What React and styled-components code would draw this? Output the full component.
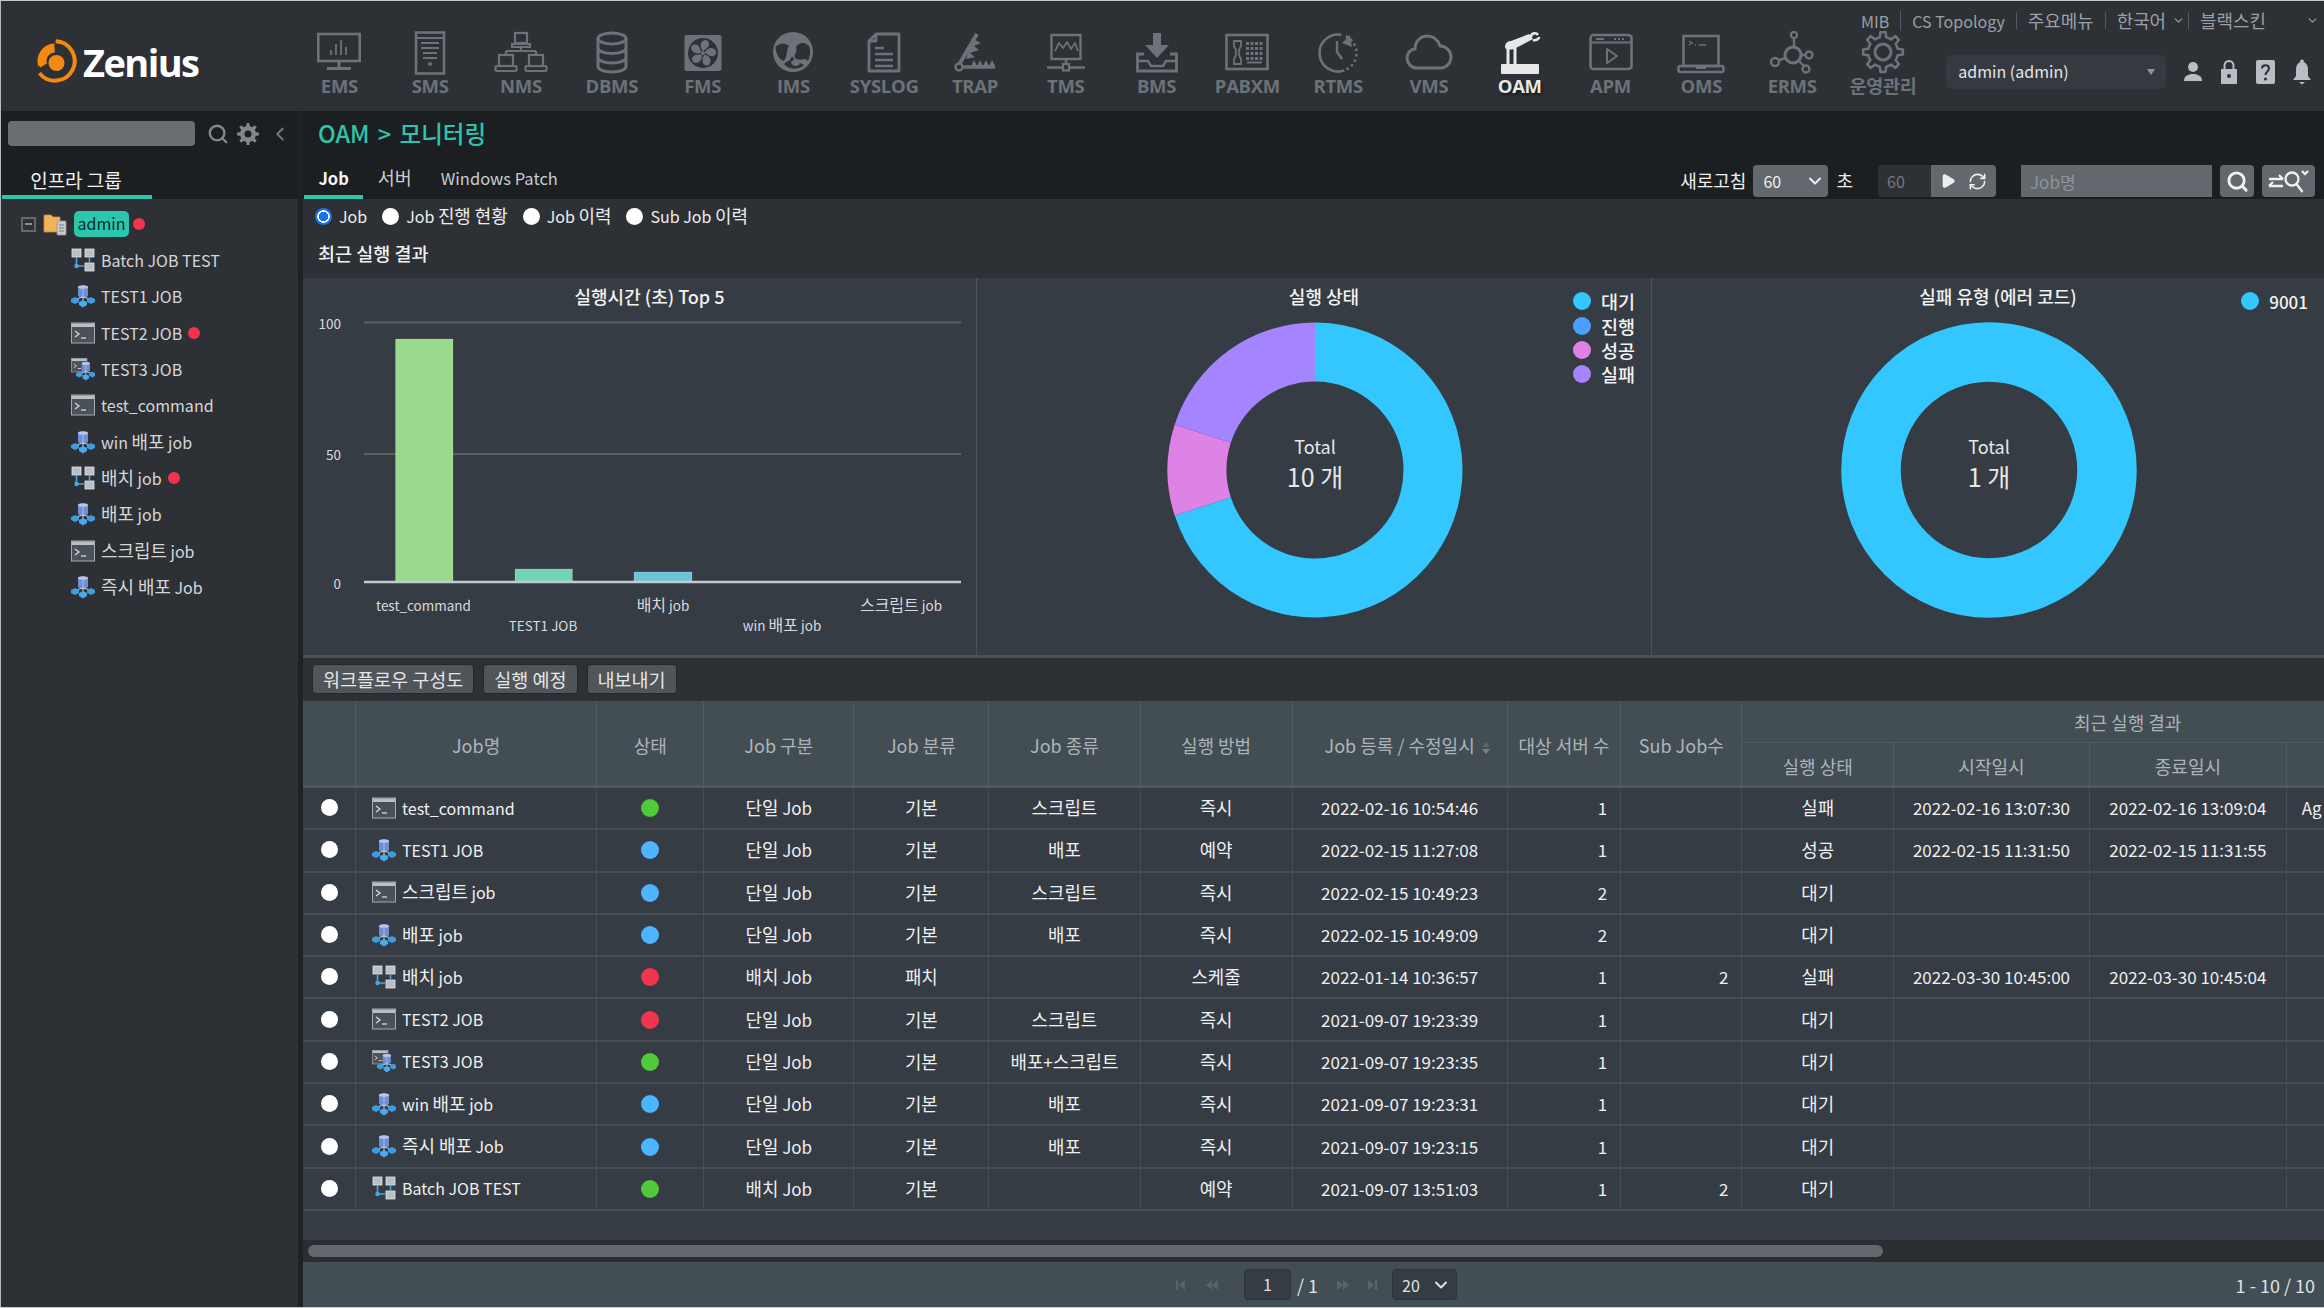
import React from "react";
import styled, { createGlobalStyle } from "styled-components";
import { ChevronDown, Search, ChevronLeft, RefreshCw, Play } from "lucide-react";

const FONT = `"Noto Sans CJK KR", "Noto Sans", sans-serif`;

const Global = createGlobalStyle`
  html, body { margin: 0; padding: 0; background: #2d3136; }
  body { font-family: ${FONT}; width: 2324px; height: 1308px; overflow: hidden; }
  * { box-sizing: border-box; }
`;

const Shell = styled.div`
  width: 2324px; height: 1308px; display: flex; flex-direction: column; overflow: hidden;
  border-top: 1px solid #c9c9c9; border-left: 1px solid #b9b9b9; border-bottom: 1px solid #c9c9c9;
  background: #2d3136; color: #e9ecee;
`;

/* Hangul runs are drawn a little larger than the Latin text around them */
const HANGUL = /([가-힣]+(?: [가-힣]+)*)/;
const Ko = styled.span`font-size: ${p => p.$s || 1.12}em; line-height: 1;`;
const K = ({ children, s }) =>
  String(children).split(HANGUL).map((part, i) =>
    i % 2 ? <Ko key={i} $s={s}>{part}</Ko> : part
  );

/* ---------- top bar ---------- */
const TopBar = styled.header`
  height: 110px; flex: none; display: flex; background: #2d3136;
`;
const Brand = styled.div`
  width: 293px; flex: none; display: flex; align-items: flex-start; gap: 6px; padding: 38px 0 0 32px;
`;
const BrandWord = styled.span`
  font-family: "Open Sans", sans-serif; font-weight: 700; font-size: 38px; line-height: 46px;
  letter-spacing: -1.6px; color: #fff;
`;
const TopRight = styled.div`flex: 1; display: flex; flex-direction: column; min-width: 0;`;
const UtilRow = styled.div`
  height: 30px; display: flex; justify-content: flex-end; align-items: center; padding: 9px 4px 0 0;
`;
const UtilLink = styled.span`
  font-size: 16px; line-height: 20px; color: #9aa0a5; padding: 0 11px; display: inline-flex; align-items: center; gap: 6px;
  border-left: ${p => (p.$first ? "none" : "1px solid #53595e")};
  margin-right: ${p => p.$gap || 0}px;
  white-space: nowrap;
`;
const NavRow = styled.div`display: flex;`;
const NavList = styled.nav`
  display: grid; grid-template-columns: repeat(18, 90.8px); flex: none;
`;
const NavItem = styled.div`
  display: flex; flex-direction: column; align-items: center;
  color: ${p => (p.$active ? "#e8e8e8" : "#6c7278")};
`;
const NavLabel = styled.span`
  font-family: "Open Sans", "Noto Sans CJK KR", sans-serif; font-weight: 700; font-size: 18.5px; line-height: 22px;
  white-space: nowrap; letter-spacing: -0.3px;
  text-shadow: ${p => (p.$active ? "1px 2px 3px #15171a" : "none")};
`;
const UserArea = styled.div`
  display: flex; align-items: center; height: 34px; margin: 24px 0 0 18px;
`;
const UserSelect = styled.div`
  width: 220px; height: 34px; background: #353a40; border-radius: 5px; display: flex; align-items: center;
  justify-content: space-between; padding: 0 11px 3px 12px; font-size: 16px; color: #e4e6e8; margin-right: 8px;
`;
const Caret = styled.i`
  width: 0; height: 0; margin-top: 3px; border-left: 4px solid transparent; border-right: 4px solid transparent; border-top: 6px solid #8d9398;
`;
const UserIcon = styled.span`width: 36.5px; display: flex; justify-content: center; color: #b8bec3;`;

/* ---------- body ---------- */
const Body = styled.div`flex: 1; display: flex; min-height: 0; background: #1f2225;`;
const Sidebar = styled.aside`width: 297px; flex: none; display: flex; flex-direction: column; background: #2d3136;`;
const SideTop = styled.div`height: 88px; flex: none; background: #1c1f22; display: flex; flex-direction: column; justify-content: space-between;`;
const SearchRow = styled.div`display: flex; align-items: center; padding: 10px 0 0 7px; color: #83888d;`;
const SideSearch = styled.div`width: 190px; height: 25px; border-radius: 4px; background: #6a6e73; margin-right: 8px;`;
const SideIcon = styled.span`display: flex; width: ${p => p.$w || 30}px; justify-content: center; color: ${p => p.$c || "#83888d"};`;
const SideTab = styled.div`
  width: 150px; height: 36px; border-bottom: 4px solid #2cc5ad; font-size: 19px; line-height: 33px; color: #f3f3f3; text-align: center; padding-right: 2px; margin-left: 1px;
`;
const Tree = styled.div`padding-top: 7px;`;
const TreeRoot = styled.div`display: flex; align-items: center; height: 36px; padding-left: 20px; gap: 7px;`;
const MinusBox = styled.span`
  width: 15px; height: 15px; border: 2px solid #62686d; display: flex; align-items: center; justify-content: center;
  &::after { content: ""; width: 7px; height: 2px; background: #8a8f94; }
`;
const RootPill = styled.span`
  background: #2cc5ad; color: #0d2d29; border-radius: 5px; height: 26px; line-height: 25px; width: 55px; text-align: center; font-size: 16px;
`;
const RedDot = styled.span`
  width: 12px; height: 12px; border-radius: 50%; background: #f0344f; flex: none; margin-left: ${p => p.$m || 0}px;
`;
const TreeRow = styled.div`
  display: flex; align-items: center; height: 36.3px; padding-left: 70px; gap: 6px; font-size: 16px; color: #d4d7da;
`;
const RowText = styled.span`white-space: nowrap;`;

const Main = styled.main`flex: 1; min-width: 0; margin-left: 5px; display: flex; flex-direction: column; background: #2d3136;`;
const TitleBar = styled.div`height: 88px; flex: none; background: #1c1f22; display: flex; flex-direction: column; justify-content: space-between;`;
const PageTitle = styled.h1`
  margin: 0; padding: 7px 0 0 15px; font-size: 23.5px; line-height: 30px; font-weight: 500; color: #2ec4ad; word-spacing: 3px;
`;
const TabRow = styled.div`display: flex; align-items: flex-end; justify-content: space-between; padding-right: 9px;`;
const Tabs = styled.div`display: flex; padding-left: 1px;`;
const Tab = styled.div`
  height: 36px; padding: 0 14.5px; line-height: 31px; font-size: 16.5px; white-space: nowrap;
  font-weight: ${p => (p.$active ? 700 : 400)};
  color: ${p => (p.$active ? "#f5f5f5" : "#c8ccd0")};
  border-bottom: 4px solid ${p => (p.$active ? "#2cc5ad" : "transparent")};
`;
const Controls = styled.div`display: flex; align-items: center; height: 32px; margin-bottom: 2px; font-size: 18px; color: #eee;`;
const CtlLabel = styled.span`margin: ${p => p.$m || "0"}; white-space: nowrap;`;
const CtlSelect = styled.div`
  width: 75px; height: 32px; background: #62686d; border-radius: 4px; display: flex; align-items: center; justify-content: space-between;
  padding: 0 3px 0 10px; color: #eee; font-size: 16px;
`;
const Timer = styled.div`display: flex; height: 32px; border-radius: 4px; overflow: hidden; margin-left: 25px;`;
const TimerVal = styled.div`width: 53px; background: #2d3136; color: #74797e; font-size: 16px; line-height: 32px; padding-left: 9px;`;
const TimerBtns = styled.div`width: 65px; background: #62686d; display: flex; align-items: center; justify-content: space-around; padding: 0 3px; color: #eee;`;
const JobInput = styled.input`
  width: 191px; height: 32px; margin-left: 25px; background: #62686d; border: 0; outline: 0; color: #eee; font: 17px ${FONT}; padding: 0 9px;
  &::placeholder { color: #8f9498; opacity: 1; }
`;
const IconBtn = styled.div`
  width: ${p => p.$w}px; height: 32px; margin-left: 8px; border-radius: 4px; background: #62686d; color: #f0f0f0; display: flex; align-items: center; justify-content: center;
`;

const RadioRow = styled.div`display: flex; align-items: center; height: 38px; padding: 0 0 4px 12px; font-size: 16px; color: #eee;`;
const RadioLabel = styled.label`display: flex; align-items: center; gap: 7px; margin-right: 15px; white-space: nowrap;`;
const Radio = styled.input.attrs({ type: "radio" })`
  appearance: none; margin: 0; width: 17px; height: 17px; border-radius: 50%; background: #fff; flex: none;
  &:checked { background: radial-gradient(circle, #1a74ef 0 4.5px, #fff 5px 6px, #1a74ef 6.5px); }
`;
const SectionTitle = styled.h2`
  margin: 0; height: 41px; padding-left: 15px; font-size: 18.5px; line-height: 32px; font-weight: 500; color: #f0f0f0;
`;
const Charts = styled.section`
  height: 380px; flex: none; display: grid; grid-template-columns: 674px 675px 1fr; background: #363c43; border-bottom: 3px solid #4a5056;
`;
const ChartCell = styled.div`
  position: relative; padding-top: 6px; display: flex; flex-direction: column; align-items: center;
  border-right: ${p => (p.$last ? "none" : "1px solid #4d5359")};
`;
const ChartTitle = styled.div`
  height: 25px; line-height: 24px; font-size: 18px; font-weight: 500; padding-left: 20px; color: #f2f2f2; white-space: nowrap;
`;
const DonutWrap = styled.div`position: relative; width: 296px; height: 296px; margin: 13px 0 0 2px;`;
const DonutCenter = styled.div`
  position: absolute; inset: 0; display: flex; flex-direction: column; align-items: center; justify-content: center; color: #e6e8ea; padding-bottom: 15px;
`;
const DonutTotal = styled.span`font-size: 18px; line-height: 26px;`;
const DonutCount = styled.span`font-size: 25px; line-height: 34px;`;
const Legend = styled.div`position: absolute; top: 11px; right: 16px; display: flex; flex-direction: column;`;
const LegendRow = styled.div`
  display: flex; align-items: center; gap: 10px; height: 24.4px; font-size: 18.5px; font-weight: 500; color: #f2f2f2;
`;
const LegendNumber = styled.span`font-size: 17px;`;
const LegendDot = styled.span`width: 18px; height: 18px; border-radius: 50%; background: ${p => p.$c};`;

const ActionBar = styled.div`height: 43px; flex: none; display: flex; align-items: center; gap: 9px; padding: 0 0 2px 9px;`;
const ActionBtn = styled.button`
  height: 30px; padding: 0 10px; background: #505559; border: 1px solid #24272a; border-radius: 4px; color: #e4e6e8;
  font: 18.5px ${FONT}; line-height: 26px; white-space: nowrap;
`;

const TableWrap = styled.div`flex: 1; min-height: 0; overflow: hidden; background: #363c43;`;
const Grid = styled.table`
  border-collapse: separate; border-spacing: 0; table-layout: fixed; width: 2211px; font-size: 17px;
`;
const Th = styled.th`
  background: #434d54; color: #adb4b9; font-weight: 400; font-size: 18px; height: ${p => p.$h || 42}px; padding: ${p => (p.$sub ? 0 : "4px 0 0")};
  border-right: 1px solid #515a61; border-bottom: ${p => (p.$sub ? "1px solid #515a61" : "3px solid #50575d")}; white-space: nowrap;
  text-align: center;
`;
const Td = styled.td`
  height: 42.3px; padding: ${p => (p.$r ? "0 13px 1px 0" : "0 0 1px")}; text-align: ${p => (p.$r ? "right" : "center")}; color: #eef0f1;
  border-right: 1px solid #474d53; border-bottom: 2px solid #474d53; white-space: nowrap; overflow: hidden;
`;
const LeftTd = styled(Td)`text-align: left; padding-left: ${p => p.$pl || 15}px;`;
const NameCell = styled.div`display: flex; align-items: center; gap: 6px; color: #eef0f1; font-size: 16px;`;
const Status = styled.span`display: block; margin: 1px auto 0; width: 18px; height: 18px; border-radius: 50%; background: ${p => p.$c};`;
const RadioCenter = styled.div`display: flex; justify-content: center;`;
const SortMark = styled.span`display: inline-flex; flex-direction: column; gap: 2px; margin: 0 -15px 0 7px; vertical-align: middle;
  &::before, &::after { content: ""; width: 0; height: 0; border-left: 4px solid transparent; border-right: 4px solid transparent; }
  &::before { border-bottom: 5px solid #5f666c; }
  &::after { border-top: 5px solid #7c8389; }
`;

const ScrollTrack = styled.div`height: 22px; flex: none; background: #2a2e31; padding: 5px 0 5px 5px;`;
const ScrollThumb = styled.div`width: 1575px; height: 12px; border-radius: 6px; background: #62686d;`;
const Footer = styled.footer`
  height: 45px; flex: none; background: #434d54; display: flex; align-items: center; padding: 0 9px 0 861px; font-size: 18px; color: #dfe2e4;
`;
const PagerIcon = styled.span`display: flex; width: ${p => p.$w || 30}px; margin-left: ${p => p.$m || 0}px; justify-content: center; color: #59636a;`;
const PageInput = styled.div`
  width: 47px; height: 31px; background: #363c43; border: 1px solid #2d3338; border-radius: 4px; text-align: center; line-height: 29px; margin: 0 6px 0 16px; font-size: 16px;
`;
const PageSelect = styled.div`
  width: 65px; height: 31px; background: #363c43; border: 1px solid #2d3338; border-radius: 4px; display: flex; align-items: center; justify-content: space-between; padding: 0 5px 0 9px; margin-left: 4px; font-size: 16px;
`;
const PageTotal = styled.span`margin-left: auto;`;

/* ---------- drawings ---------- */
const pt = (cx, cy, r, a) => {
  const t = ((a - 90) * Math.PI) / 180;
  return [cx + r * Math.cos(t), cy + r * Math.sin(t)];
};
const arc = (cx, cy, r, a0, a1) => {
  const [x0, y0] = pt(cx, cy, r, a0);
  const [x1, y1] = pt(cx, cy, r, a1);
  return `M${x0} ${y0}A${r} ${r} 0 ${a1 - a0 > 180 ? 1 : 0} 1 ${x1} ${y1}`;
};
const ring = (cx, cy, R, r, a0, a1) => {
  const [x0, y0] = pt(cx, cy, R, a0);
  const [x1, y1] = pt(cx, cy, R, a1);
  const [x2, y2] = pt(cx, cy, r, a1);
  const [x3, y3] = pt(cx, cy, r, a0);
  const f = a1 - a0 > 180 ? 1 : 0;
  return `M${x0} ${y0}A${R} ${R} 0 ${f} 1 ${x1} ${y1}L${x2} ${y2}A${r} ${r} 0 ${f} 0 ${x3} ${y3}Z`;
};
const gear = (cx, cy, R, r, n) => {
  const step = 360 / n;
  let d = "";
  for (let i = 0; i < n; i++) {
    const a = i * step;
    const p = [
      pt(cx, cy, r, a - step * 0.5),
      pt(cx, cy, r, a - step * 0.28),
      pt(cx, cy, R, a - step * 0.16),
      pt(cx, cy, R, a + step * 0.16),
      pt(cx, cy, r, a + step * 0.28),
    ];
    p.forEach(([x, y], j) => { d += `${i === 0 && j === 0 ? "M" : "L"}${x.toFixed(2)} ${y.toFixed(2)}`; });
  }
  return d + "Z";
};

const Logo = () => (
  <svg width="44" height="44" viewBox="0 0 44 44">
    <path d={arc(22, 22, 19.7, 2, 232)} fill="none" stroke="#f28a10" strokeWidth="4" />
    <path d={ring(22, 22, 17.5, 8.5, 252, 358)} fill="#f28a10" />
    <path d="M6 24a16 16 0 0 0 1.2 4.5l5-3a10 10 0 0 1-.6-1.5Z" fill="#f28a10" />
    <circle cx="23.5" cy="24" r="8" fill="#f28a10" />
  </svg>
);

const SolidGear = () => (
  <svg width="22" height="22" viewBox="0 0 22 22">
    <path d={gear(11, 11, 11, 8, 8)} fill="currentColor" />
    <circle cx="11" cy="11" r="3.5" fill="#1c1f22" />
  </svg>
);

const NI = ({ children, box = "-6 0 56 44" }) => (
  <svg width="56" height="44" viewBox={box} fill="none" stroke="currentColor" strokeWidth="2.6">{children}</svg>
);
const navIcons = {
  EMS: (
    <NI>
      <rect x="1.3" y="3" width="41.4" height="27" />
      <path d="M22 30v6M10 37.5h24" strokeWidth="3" />
      <path d="M14 24v-5M19 24V13M24 24V9M29 24v-8" strokeWidth="1.8" />
    </NI>
  ),
  SMS: (
    <NI>
      <rect x="8" y="1.5" width="28" height="41" />
      <path d="M8 7h28M13 12h18M13 17h18M15 22h14M15 27h14" strokeWidth="1.8" />
      <circle cx="22" cy="33" r="2" fill="currentColor" stroke="none" />
    </NI>
  ),
  NMS: (
    <NI>
      <rect x="16" y="2" width="12" height="10" strokeWidth="2.2" />
      <rect x="13" y="13" width="18" height="3" strokeWidth="2" />
      <path d="M22 16v4M7 20h30M7 20v4M37 20v4" strokeWidth="2.2" />
      <rect x="0" y="24" width="14" height="11" strokeWidth="2.2" />
      <rect x="-3.5" y="35" width="21" height="5" rx="1" strokeWidth="2.2" />
      <rect x="30" y="24" width="14" height="11" strokeWidth="2.2" />
      <rect x="26.5" y="35" width="21" height="5" rx="1" strokeWidth="2.2" />
    </NI>
  ),
  DBMS: (
    <NI>
      <ellipse cx="22" cy="7.5" rx="14" ry="5.5" strokeWidth="3" />
      <path d="M8 7.5v28c0 3 6 5.5 14 5.5s14-2.5 14-5.5v-28M8 17c0 3 6 5.5 14 5.5S36 20 36 17M8 26.5c0 3 6 5.5 14 5.5s14-2.5 14-5.5" strokeWidth="3" />
    </NI>
  ),
  FMS: (
    <NI>
      <rect x="3.5" y="4" width="37" height="36" rx="2" fill="currentColor" stroke="none" />
      <circle cx="22" cy="22" r="15" fill="#2d3136" stroke="none" />
      {[0, 72, 144, 216, 288].map(a => (
        <path key={a} transform={`rotate(${a} 22 22)`} d="M22 20C18 16 19 10 24 9C28 9 29 13 27 16C25 18 24 19 22 20Z" fill="currentColor" stroke="none" />
      ))}
      <circle cx="22" cy="22" r="2" fill="currentColor" stroke="none" />
    </NI>
  ),
  IMS: (
    <NI>
      <circle cx="22" cy="21" r="20" fill="currentColor" stroke="none" />
      <path d="M4.5 16C8 12 13 11 18 15C15 19 17 24 13 30C9 29 5 24 4.5 16Z M25 16C28 11 34 11 38 15C40 20 39 26 37 30C32 26 30 31 24 27C22 24 27 21 25 16Z M13 33C17 29 19 31 21 25C24 31 29 32 33 34C28 39 17 39 13 33Z" fill="#2d3136" stroke="none" />
      <path d="M20 31C24 26 27 30 29 33C26 36 21 36 20 31Z" fill="currentColor" stroke="none" />
    </NI>
  ),
  SYSLOG: (
    <NI>
      <path d="M14 3h23v37H7V10ZM14 3v7H7" strokeWidth="2.8" strokeLinejoin="round" />
      <path d="M13 17h9M13 23h18M13 29h18M13 35h18" strokeWidth="2.4" />
    </NI>
  ),
  TRAP: (
    <NI>
      <circle cx="6" cy="36" r="3.5" strokeWidth="2.4" />
      <path d="M7 32L24 3" strokeWidth="4" />
      <path d="M10 36H42" strokeWidth="3.5" />
      <path d="M20 8L28 12L21 15L26 19L17 22L22 26L13 28Z" fill="currentColor" stroke="none" />
      <path d="M18 35l3-6 3 6 3-6 3 6 3-6 3 6 3-6 3 6Z" fill="currentColor" stroke="none" />
    </NI>
  ),
  TMS: (
    <NI>
      <rect x="7.5" y="4" width="29" height="24" strokeWidth="2.4" />
      <path d="M11 20l4-8 4 5 4-6 4 7 4-6 3 8" strokeWidth="1.7" />
      <path d="M22 28v5M3 36.5h16M25 36.5h16" strokeWidth="2.6" />
      <rect x="19" y="33" width="6" height="6.5" strokeWidth="2.2" />
    </NI>
  ),
  BMS: (
    <NI>
      <path d="M18 2h8v12h8L22 27 10 14h8Z" fill="currentColor" stroke="none" />
      <path d="M9 23H2.5V40h39V23H35" strokeWidth="2.8" />
      <path d="M3 30h10l3 5h12l3-5h10" strokeWidth="2.4" />
    </NI>
  ),
  PABXM: (
    <NI>
      <rect x="1.5" y="4" width="41" height="34" strokeWidth="2.6" />
      <path d="M9 10h7v5l-2 4v5l2 4v5H9v-5l2-4v-5l-2-4Z" strokeWidth="1.8" />
      {[0, 1, 2, 3].map(r =>
        [0, 1, 2, 3].map(c => (
          <rect key={`${r}${c}`} x={21 + c * 4.5} y={11 + r * 5} width="3" height="3" fill="currentColor" stroke="none" />
        ))
      )}
      <path d="M22 31.5h15" strokeWidth="2" />
    </NI>
  ),
  RTMS: (
    <NI>
      <path d={arc(22, 22, 18.5, 160, 370)} strokeWidth="2.6" />
      <path d={arc(22, 22, 18.5, 25, 160)} strokeWidth="2.6" strokeDasharray="2.5 3" />
      <path d="M34 4l2 12-10-4Z" fill="currentColor" stroke="none" />
      <path d="M21 10v11l5 7" strokeWidth="2.4" />
    </NI>
  ),
  VMS: (
    <NI>
      <path d="M10 37C4 37 0 32 0 27C0 22 4 18 8 18C8 10 14 5 20 5C27 5 31 9 33 15C39 15 44 20 44 26C44 32 39 37 34 37Z" strokeWidth="3" strokeLinejoin="round" />
    </NI>
  ),
  OAM: (
    <NI>
      <rect x="3" y="33" width="38" height="10" rx="1" fill="currentColor" stroke="none" />
      <path d="M10 33V17M17 33V17" strokeWidth="3" />
      <path d="M7 16c0-4 3-6 6-6l18-7 4 5-19 10c-3 1-9 1-9-2Z" fill="currentColor" stroke="none" />
      <path d="M33 6c0-4 5-5 7-2M35 9c3 1 6-1 6-3" strokeWidth="2.6" />
    </NI>
  ),
  APM: (
    <NI>
      <rect x="1.5" y="4" width="41" height="34" rx="3" strokeWidth="2.6" />
      <path d="M2 11.5h40" strokeWidth="2" />
      <path d="M7 8h8M25 8h2M29 8h2M33 8h2" strokeWidth="2" />
      <path d="M18 18v14l10-7Z" strokeWidth="2" strokeLinejoin="round" />
    </NI>
  ),
  OMS: (
    <NI>
      <rect x="4.5" y="5" width="35" height="30" strokeWidth="2.6" />
      <rect x="-0.5" y="35" width="45" height="6" rx="2" strokeWidth="2.6" />
      <path d="M10 10l3 2-3 2M16 14h1M20 14h7" strokeWidth="1.5" />
      <rect x="17" y="35" width="10" height="3" fill="currentColor" stroke="none" />
    </NI>
  ),
  ERMS: (
    <NI>
      <circle cx="23" cy="24" r="8" strokeWidth="3" />
      <circle cx="24" cy="4" r="3" strokeWidth="2.2" />
      <circle cx="5" cy="31" r="4" strokeWidth="2.4" />
      <circle cx="39" cy="24" r="3.5" strokeWidth="2.4" />
      <circle cx="36" cy="38" r="3.5" strokeWidth="2.4" />
      <path d="M24 7v9M9 29l7-2M31 24h4.5M29 30l5 5" strokeWidth="2.4" />
    </NI>
  ),
  운영관리: (
    <NI>
      <path d={gear(22, 21, 20, 15, 8)} strokeWidth="2.6" strokeLinejoin="round" />
      <circle cx="22" cy="21" r="8" strokeWidth="3" />
    </NI>
  ),
};
const NAV = ["EMS", "SMS", "NMS", "DBMS", "FMS", "IMS", "SYSLOG", "TRAP", "TMS", "BMS", "PABXM", "RTMS", "VMS", "OAM", "APM", "OMS", "ERMS", "운영관리"];

const FolderIcon = () => (
  <svg width="24" height="24" viewBox="0 0 24 24">
    <path d="M1 3h7l2 2h7v15H1Z" fill="#f3b15a" stroke="#c98b3d" strokeWidth="0.8" />
    <rect x="14" y="9" width="9" height="14" rx="1" fill="#c8ccd0" stroke="#8f959a" strokeWidth="0.8" />
    <path d="M16 13h5M16 16h5M16 19h5" stroke="#777d83" strokeWidth="1" />
  </svg>
);
const TerminalGlyph = () => (
  <>
    <rect x="0.5" y="2" width="23" height="20" fill="#4a5157" stroke="#a5abb0" strokeWidth="1" />
    <rect x="1" y="2.5" width="22" height="3.5" fill="#b9bfc4" />
    <path d="M4 10l4 3-4 3" fill="none" stroke="#d6dade" strokeWidth="1.3" />
    <path d="M10 17h5" stroke="#d6dade" strokeWidth="1.3" />
  </>
);
const DeployGlyph = () => (
  <>
    <path d="M7 3c1.5-2 8.5-2 10 0v9c-2 2-8 2-10 0Z" fill="#6e8fd6" />
    <ellipse cx="12" cy="3" rx="5" ry="1.8" fill="#b5c6ea" />
    <path d="M12 3v10" stroke="#a9bce6" strokeWidth="1" />
    <path d="M12 13v5M5 15l7-2 7 2" stroke="#d2d6da" strokeWidth="1" fill="none" />
    <path d="M4 13l4 2v3l-4 2-4-2v-3Z" fill="#3c9ee0" />
    <path d="M12 16l4 2v3l-4 2.5-4-2.5v-3Z" fill="#4aa9e8" />
    <path d="M20 13l4 2v3l-4 2-4-2v-3Z" fill="#3c9ee0" />
  </>
);
const TerminalIcon = () => <svg width="24" height="24" viewBox="0 0 24 24"><TerminalGlyph /></svg>;
const DeployIcon = () => <svg width="24" height="24" viewBox="0 0 24 24"><DeployGlyph /></svg>;
const BatchIcon = () => (
  <svg width="24" height="24" viewBox="0 0 24 24">
    <rect x="1" y="1" width="9" height="8" fill="#b9bfc4" stroke="#e4e7e9" strokeWidth="0.8" />
    <rect x="14" y="1" width="9" height="8" fill="#b9bfc4" stroke="#e4e7e9" strokeWidth="0.8" />
    <rect x="14" y="15" width="9" height="8" fill="#b9bfc4" stroke="#e4e7e9" strokeWidth="0.8" />
    <path d="M5.5 9v9H13M18.5 9v6" stroke="#49a7e6" strokeWidth="1.6" fill="none" />
    <circle cx="5.5" cy="18" r="2.2" fill="#49a7e6" />
  </svg>
);
const MixedIcon = () => (
  <svg width="24" height="24" viewBox="0 0 24 24">
    <g transform="scale(0.68)"><TerminalGlyph /></g>
    <g transform="translate(5 4) scale(0.82)"><DeployGlyph /></g>
  </svg>
);
const JOB_ICON = { t: TerminalIcon, d: DeployIcon, b: BatchIcon, m: MixedIcon };

const TREE = [
  ["Batch JOB TEST", "b"], ["TEST1 JOB", "d"], ["TEST2 JOB", "t", true], ["TEST3 JOB", "m"], ["test_command", "t"],
  ["win 배포 job", "d"], ["배치 job", "b", true], ["배포 job", "d"], ["스크립트 job", "t"], ["즉시 배포 Job", "d"],
];

const GREEN = "#4fca3a", BLUE = "#4db5ff", RED = "#f0354e";
const ROWS = [
  ["test_command", "t", GREEN, "단일 Job", "기본", "스크립트", "즉시", "2022-02-16 10:54:46", "1", "", "실패", "2022-02-16 13:07:30", "2022-02-16 13:09:04", "Ag"],
  ["TEST1 JOB", "d", BLUE, "단일 Job", "기본", "배포", "예약", "2022-02-15 11:27:08", "1", "", "성공", "2022-02-15 11:31:50", "2022-02-15 11:31:55", ""],
  ["스크립트 job", "t", BLUE, "단일 Job", "기본", "스크립트", "즉시", "2022-02-15 10:49:23", "2", "", "대기", "", "", ""],
  ["배포 job", "d", BLUE, "단일 Job", "기본", "배포", "즉시", "2022-02-15 10:49:09", "2", "", "대기", "", "", ""],
  ["배치 job", "b", RED, "배치 Job", "패치", "", "스케줄", "2022-01-14 10:36:57", "1", "2", "실패", "2022-03-30 10:45:00", "2022-03-30 10:45:04", ""],
  ["TEST2 JOB", "t", RED, "단일 Job", "기본", "스크립트", "즉시", "2021-09-07 19:23:39", "1", "", "대기", "", "", ""],
  ["TEST3 JOB", "m", GREEN, "단일 Job", "기본", "배포+스크립트", "즉시", "2021-09-07 19:23:35", "1", "", "대기", "", "", ""],
  ["win 배포 job", "d", BLUE, "단일 Job", "기본", "배포", "즉시", "2021-09-07 19:23:31", "1", "", "대기", "", "", ""],
  ["즉시 배포 Job", "d", BLUE, "단일 Job", "기본", "배포", "즉시", "2021-09-07 19:23:15", "1", "", "대기", "", "", ""],
  ["Batch JOB TEST", "b", GREEN, "배치 Job", "기본", "", "예약", "2021-09-07 13:51:03", "1", "2", "대기", "", "", ""],
];
const COLS = [53, 241, 107, 150, 135, 151, 152, 215, 113.5, 121, 151.5, 196, 196.6, 227];
const HEAD = ["Job명", "상태", "Job 구분", "Job 분류", "Job 종류", "실행 방법"];

const CYAN = "#33c6ff", AZURE = "#4a9fff", PINK = "#de82e6", PURPLE = "#a585ff";

const BarChart = () => {
  const bars = [[92.5, 57.5, 339, "#9bd98d"], [212, 57.5, 569, "#73d4b5"], [331, 58, 572, "#6fc3d8"]];
  const xl = [
    [120.5, 297, "test_command"], [240, 316.5, "TEST1 JOB"], [360, 297, "배치 job"], [479, 316.5, "win 배포 job"], [598, 297, "스크립트 job"],
  ];
  const txt = { fill: "#d8dbde", fontSize: 13.5, fontFamily: FONT };
  return (
    <svg width="673" height="346" viewBox="0 0 673 346">
      <path d="M61 13.5H658M61 145H658" stroke="#5a5f63" strokeWidth="2" />
      {bars.map(([x, w, top, c]) => (
        <rect key={x} x={x} y={top - 309} width={w} height={581.7 - top} fill={c} stroke="#ffffff22" />
      ))}
      <path d="M61 273H658" stroke="#c3cad1" strokeWidth="2.5" />
      <text x="38" y="20" textAnchor="end" {...txt}>100</text>
      <text x="38" y="151" textAnchor="end" {...txt}>50</text>
      <text x="38" y="280" textAnchor="end" {...txt}>0</text>
      {xl.map(([x, y, t]) => (
        <text key={t} x={x} y={y + 5} textAnchor="middle" {...txt}>
          {t.split(HANGUL).map((part, i) =>
            i % 2 ? <tspan key={i} fontSize="16">{part}</tspan> : part
          )}
        </text>
      ))}
    </svg>
  );
};

const Donut = ({ segments, total }) => {
  let a = 0;
  const whole = segments.reduce((s, x) => s + x[0], 0);
  return (
    <DonutWrap>
      <svg width="296" height="296" viewBox="0 0 296 296">
        {segments.length === 1 ? (
          <circle cx="148" cy="148" r="118" fill="none" stroke={segments[0][1]} strokeWidth="59.5" />
        ) : (
          segments.map(([v, c]) => {
            const a0 = a;
            a += (v / whole) * 360;
            return <path key={c} d={ring(148, 148, 147.5, 88.5, a0, a)} fill={c} />;
          })
        )}
      </svg>
      <DonutCenter>
        <DonutTotal>Total</DonutTotal>
        <DonutCount>{total}</DonutCount>
      </DonutCenter>
    </DonutWrap>
  );
};

const PersonIcon = () => (
  <svg width="20" height="22" viewBox="0 0 20 22" fill="currentColor">
    <circle cx="10" cy="6" r="5" />
    <path d="M1 20c0-5 4-7 9-7s9 2 9 7Z" />
  </svg>
);
const LockIcon = () => (
  <svg width="18" height="26" viewBox="0 0 18 26" fill="currentColor">
    <path d="M4.5 11V6.5a4.5 4.5 0 0 1 9 0V11" fill="none" stroke="currentColor" strokeWidth="2" />
    <path d="M1 10h16v15H1Z" />
    <circle cx="9" cy="17" r="2" fill="#2d3136" />
  </svg>
);
const HelpIcon = () => (
  <svg width="19" height="24" viewBox="0 0 19 24">
    <rect width="19" height="24" rx="2" fill="currentColor" />
    <path d="M6 8.5C6 4 13 4 13 8.5C13 11.5 9.5 11.5 9.5 15" fill="none" stroke="#2d3136" strokeWidth="2" />
    <circle cx="9.5" cy="19" r="1.5" fill="#2d3136" />
  </svg>
);
const BellIcon = () => (
  <svg width="20" height="26" viewBox="0 0 20 26" fill="currentColor">
    <circle cx="10" cy="2.5" r="2" />
    <path d="M10 3c4 0 6 3 6 8v6l3 4H1l3-4v-6c0-5 2-8 6-8Z" />
    <path d="M7 23h6l-3 2.5Z" />
  </svg>
);
const AdvSearch = () => (
  <svg width="44" height="28" viewBox="0 0 44 28" fill="none" stroke="currentColor" strokeWidth="2.3">
    <path d="M2 12h14M12 8l4 4M2 19h14M6 15l-4 4" />
    <circle cx="25" cy="12" r="6.5" />
    <path d="M29.5 17l6 8M35 4l3 3 3-3" />
  </svg>
);
const PageArrow = ({ d }) => (
  <svg width="14" height="16" viewBox="0 0 14 16" fill="currentColor"><path d={d} /></svg>
);

export default function App() {
  return (
    <>
      <Global />
      <Shell>
        <TopBar>
          <Brand>
            <Logo />
            <BrandWord>Zenius</BrandWord>
          </Brand>
          <TopRight>
            <UtilRow>
              <UtilLink $first>MIB</UtilLink>
              <UtilLink>CS Topology</UtilLink>
              <UtilLink><Ko>주요메뉴</Ko></UtilLink>
              <UtilLink $gap={-8}><Ko>한국어</Ko> <ChevronDown size={13} /></UtilLink>
              <UtilLink $gap={-10}><Ko>블랙스킨</Ko><ChevronDown size={13} style={{ marginLeft: 34 }} /></UtilLink>
            </UtilRow>
            <NavRow>
              <NavList>
                {NAV.map(n => (
                  <NavItem key={n} $active={n === "OAM"}>
                    {navIcons[n]}
                    <NavLabel $active={n === "OAM"}>{n}</NavLabel>
                  </NavItem>
                ))}
              </NavList>
              <UserArea>
                <UserSelect>admin (admin)<Caret /></UserSelect>
                <UserIcon><PersonIcon /></UserIcon>
                <UserIcon><LockIcon /></UserIcon>
                <UserIcon><HelpIcon /></UserIcon>
                <UserIcon><BellIcon /></UserIcon>
              </UserArea>
            </NavRow>
          </TopRight>
        </TopBar>

        <Body>
          <Sidebar>
            <SideTop>
              <SearchRow>
                <SideSearch />
                <SideIcon><Search size={22} strokeWidth={2.6} /></SideIcon>
                <SideIcon><SolidGear /></SideIcon>
                <SideIcon $w={36} $c="#74797e"><ChevronLeft size={22} strokeWidth={2} /></SideIcon>
              </SearchRow>
              <SideTab>인프라 그룹</SideTab>
            </SideTop>
            <Tree>
              <TreeRoot>
                <MinusBox />
                <FolderIcon />
                <RootPill>admin</RootPill>
                <RedDot $m={-3} />
              </TreeRoot>
              {TREE.map(([name, type, alert]) => {
                const I = JOB_ICON[type];
                return (
                  <TreeRow key={name}>
                    <I />
                    <RowText><K>{name}</K></RowText>
                    {alert && <RedDot />}
                  </TreeRow>
                );
              })}
            </Tree>
          </Sidebar>

          <Main>
            <TitleBar>
              <PageTitle>OAM &gt; 모니터링</PageTitle>
              <TabRow>
                <Tabs>
                  <Tab $active>Job</Tab>
                  <Tab><Ko>서버</Ko></Tab>
                  <Tab>Windows Patch</Tab>
                </Tabs>
                <Controls>
                  <CtlLabel $m="0 7px 3px 0">새로고침</CtlLabel>
                  <CtlSelect>60<ChevronDown size={20} strokeWidth={2.4} /></CtlSelect>
                  <CtlLabel $m="0 0 3px 8px">초</CtlLabel>
                  <Timer>
                    <TimerVal>60</TimerVal>
                    <TimerBtns>
                      <Play size={16} fill="currentColor" />
                      <RefreshCw size={19} />
                    </TimerBtns>
                  </Timer>
                  <JobInput placeholder="Job명" readOnly />
                  <IconBtn $w={34}><Search size={23} strokeWidth={3} /></IconBtn>
                  <IconBtn $w={53}><AdvSearch /></IconBtn>
                </Controls>
              </TabRow>
            </TitleBar>

            <RadioRow>
              <RadioLabel><Radio name="v" defaultChecked />Job</RadioLabel>
              <RadioLabel><Radio name="v" /><span><K>Job 진행 현황</K></span></RadioLabel>
              <RadioLabel><Radio name="v" /><span><K>Job 이력</K></span></RadioLabel>
              <RadioLabel><Radio name="v" /><span><K>Sub Job 이력</K></span></RadioLabel>
            </RadioRow>
            <SectionTitle>최근 실행 결과</SectionTitle>

            <Charts>
              <ChartCell>
                <ChartTitle>실행시간 (초) Top 5</ChartTitle>
                <BarChart />
              </ChartCell>
              <ChartCell>
                <ChartTitle>실행 상태</ChartTitle>
                <Donut segments={[[7, CYAN], [1, PINK], [2, PURPLE]]} total="10 개" />
                <Legend>
                  {[["대기", CYAN], ["진행", AZURE], ["성공", PINK], ["실패", PURPLE]].map(([t, c]) => (
                    <LegendRow key={t}><LegendDot $c={c} />{t}</LegendRow>
                  ))}
                </Legend>
              </ChartCell>
              <ChartCell $last>
                <ChartTitle>실패 유형 (에러 코드)</ChartTitle>
                <Donut segments={[[1, CYAN]]} total="1 개" />
                <Legend>
                  <LegendRow><LegendDot $c={CYAN} /><LegendNumber>9001</LegendNumber></LegendRow>
                </Legend>
              </ChartCell>
            </Charts>

            <ActionBar>
              <ActionBtn>워크플로우 구성도</ActionBtn>
              <ActionBtn>실행 예정</ActionBtn>
              <ActionBtn>내보내기</ActionBtn>
            </ActionBar>

            <TableWrap>
              <Grid>
                <colgroup>
                  {COLS.map((w, i) => <col key={i} width={w} />)}
                </colgroup>
                <thead>
                  <tr>
                    <Th rowSpan={2} />
                    {HEAD.map(h => <Th key={h} rowSpan={2}>{h}</Th>)}
                    <Th rowSpan={2}>Job 등록 / 수정일시<SortMark /></Th>
                    <Th rowSpan={2}>대상 서버 수</Th>
                    <Th rowSpan={2}>Sub Job수</Th>
                    <Th colSpan={4} $sub>최근 실행 결과</Th>
                  </tr>
                  <tr>
                    <Th $h={45}>실행 상태</Th>
                    <Th $h={45}>시작일시</Th>
                    <Th $h={45}>종료일시</Th>
                    <Th $h={45} />
                  </tr>
                </thead>
                <tbody>
                  {ROWS.map(r => {
                    const I = JOB_ICON[r[1]];
                    return (
                      <tr key={r[0]}>
                        <Td><RadioCenter><Radio name="job" /></RadioCenter></Td>
                        <LeftTd $pl={16}><NameCell><I /><RowText><K>{r[0]}</K></RowText></NameCell></LeftTd>
                        <Td><Status $c={r[2]} /></Td>
                        <Td><K s={1.05}>{r[3]}</K></Td>
                        <Td><K s={1.05}>{r[4]}</K></Td>
                        <Td><K s={1.05}>{r[5]}</K></Td>
                        <Td><K s={1.05}>{r[6]}</K></Td>
                        <Td>{r[7]}</Td>
                        <Td $r>{r[8]}</Td>
                        <Td $r>{r[9]}</Td>
                        <Td><K s={1.05}>{r[10]}</K></Td>
                        <Td>{r[11]}</Td>
                        <Td>{r[12]}</Td>
                        <LeftTd $pl={15}>{r[13]}</LeftTd>
                      </tr>
                    );
                  })}
                </tbody>
              </Grid>
            </TableWrap>
            <ScrollTrack><ScrollThumb /></ScrollTrack>
            <Footer>
              <PagerIcon $w={32}><PageArrow d="M3 3h2v10H3ZM12 3v10L6 8Z" /></PagerIcon>
              <PagerIcon $w={32}><PageArrow d="M7 3v10L1 8ZM13 3v10L7 8Z" /></PagerIcon>
              <PageInput>1</PageInput>
              / 1
              <PagerIcon $m={10}><PageArrow d="M1 3l6 5-6 5ZM7 3l6 5-6 5Z" /></PagerIcon>
              <PagerIcon><PageArrow d="M2 3l6 5-6 5ZM9 3h2v10H9Z" /></PagerIcon>
              <PageSelect>20<ChevronDown size={20} strokeWidth={2.4} /></PageSelect>
              <PageTotal>1 - 10 / 10</PageTotal>
            </Footer>
          </Main>
        </Body>
      </Shell>
    </>
  );
}
